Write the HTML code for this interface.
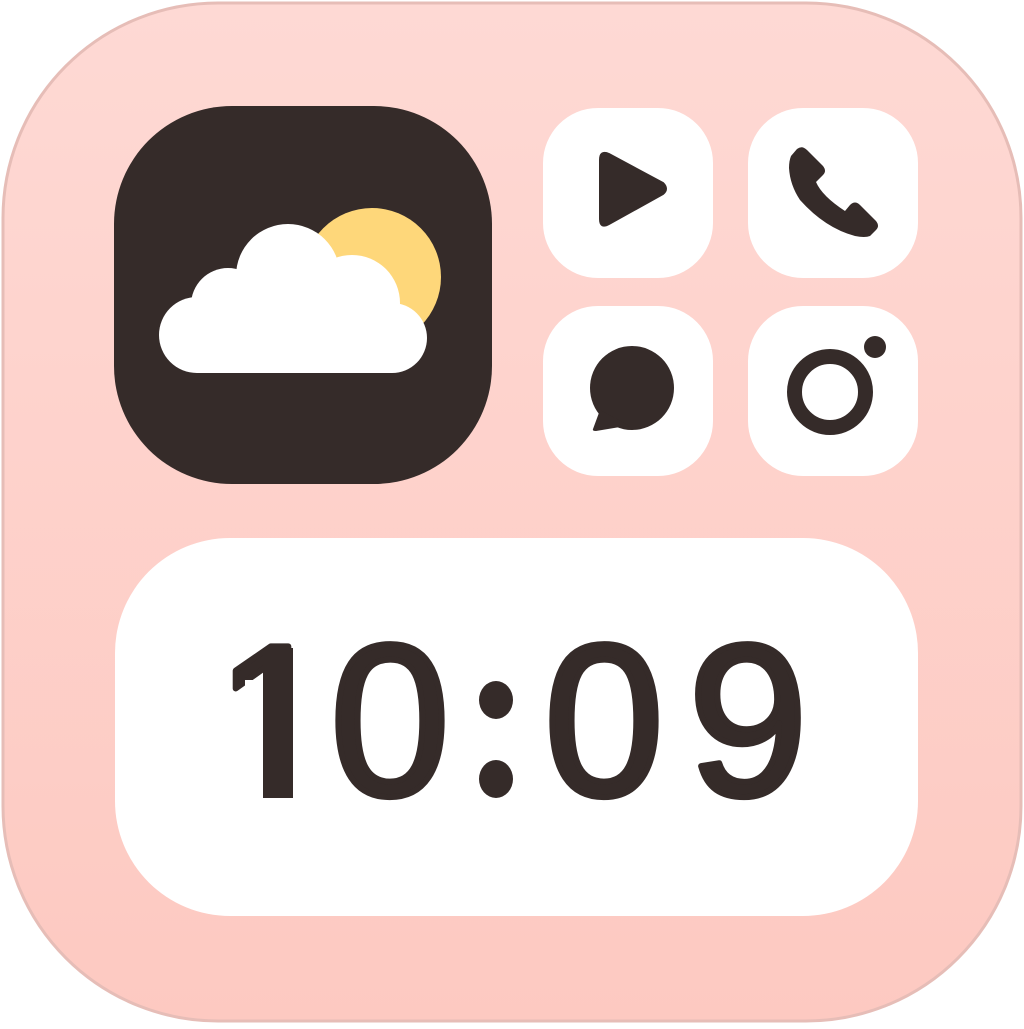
<!DOCTYPE html>
<html><head><meta charset="utf-8"><style>
html,body{margin:0;padding:0;background:#fff;}
body{width:1024px;height:1024px;overflow:hidden;}
</style></head><body>
<svg width="1024" height="1024" viewBox="0 0 1024 1024" xmlns="http://www.w3.org/2000/svg">
<defs>
<linearGradient id="bg" x1="0" y1="0" x2="0" y2="1">
<stop offset="0" stop-color="#fed9d4"/><stop offset="1" stop-color="#fdc9c1"/>
</linearGradient>
</defs>
<rect x="0" y="0" width="1024" height="1024" fill="#fff"/>
<rect x="3" y="3" width="1018" height="1018" rx="215" fill="url(#bg)" stroke="#e6bdb7" stroke-width="3"/>
<rect x="114" y="106" width="378" height="378" rx="118" fill="#352b29"/>
<circle cx="372" cy="277" r="69" fill="#fed77a"/>
<g fill="#fff">
<circle cx="288" cy="276" r="52"/>
<circle cx="228" cy="305" r="37"/>
<circle cx="352" cy="303" r="48"/>
<circle cx="197" cy="335" r="38"/>
<circle cx="392" cy="338" r="35"/>
<rect x="197" y="300" width="195" height="73"/>
</g>
<g fill="#fff">
<rect x="543" y="108" width="170" height="170" rx="55"/>
<rect x="748" y="108" width="170" height="170" rx="55"/>
<rect x="543" y="306" width="170" height="170" rx="55"/>
<rect x="748" y="306" width="170" height="170" rx="55"/>
</g>
<g fill="#352b29">
<path d="M600 160 Q600 150 609 154 L663 183 Q669 189 663 194 L609 224 Q600 229 600 219 Z" stroke="#352b29" stroke-width="2" stroke-linejoin="round"/>
<path d="M797 149 Q802 145 807 150 L823 166 Q827 171 823 175 L816 182 Q822 196 845 211 L850 205 Q855 200 860 205 L876 221 Q880 226 876 230 L870 236 Q865 238 855 236 Q825 228 800 200 Q790 185 789 168 Q789 161 791 156 Z"/>
<circle cx="632" cy="388" r="42"/>
<path d="M600 410 L593 429 Q592 431 596 431 L620 427 L630 426 Z"/>
<circle cx="830" cy="392" r="35.5" fill="none" stroke="#352b29" stroke-width="15"/>
<circle cx="875" cy="347" r="11"/>
</g>
<rect x="115" y="538" width="803" height="378" rx="115" fill="#fff"/>
<g font-family="Liberation Sans, sans-serif" font-size="216" fill="#352b29" stroke="#352b29" stroke-width="6" stroke-linejoin="round" text-anchor="middle">
<text x="275" y="795">1</text>
<text x="390" y="795">0</text>
<text x="496" y="795">:</text>
<text x="604" y="795">0</text>
<text x="748" y="795">9</text>
</g>
<g fill="#fff">
<rect x="245" y="680" width="18" height="124"/>
<rect x="200" y="750" width="63" height="54"/>
<rect x="293" y="660" width="37" height="144"/>
<rect x="474" y="670" width="44" height="135"/>
</g>
<g fill="#352b29">
<rect x="263" y="648" width="30" height="149"/>
<ellipse cx="496" cy="700" rx="17" ry="19"/>
<ellipse cx="496" cy="779" rx="17" ry="19"/>
</g>
</svg>
</body></html>
